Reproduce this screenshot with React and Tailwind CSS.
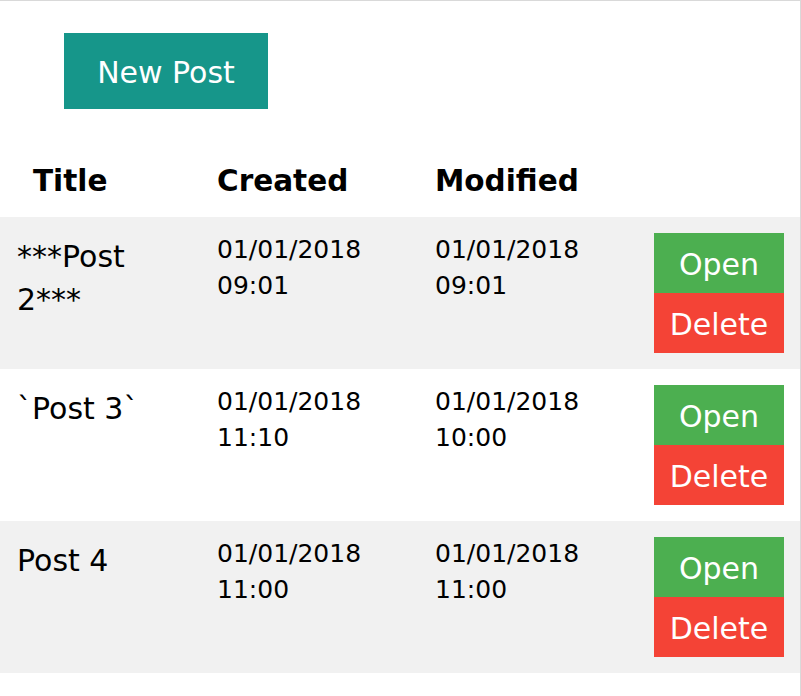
const posts = [
  { title: '***Post 2***', created: ['01/01/2018', '09:01'], modified: ['01/01/2018', '09:01'] },
  { title: '`Post 3`', created: ['01/01/2018', '11:10'], modified: ['01/01/2018', '10:00'] },
  { title: 'Post 4', created: ['01/01/2018', '11:00'], modified: ['01/01/2018', '11:00'] },
];

export default function App() {
  return (
    <div
      className="w-[801px] h-[696px] bg-white border-t border-r border-[#d9d9d9] text-black overflow-hidden"
      style={{ fontFamily: '"DejaVu Sans", Verdana, sans-serif' }}
    >
      <div className="pt-[32px]">
        <button className="ml-[64px] w-[204px] h-[76px] bg-[#16968a] text-white text-[30px] leading-none pt-[3px]">
          New Post
        </button>
      </div>

      {/* Table header */}
      <div className="mt-[33px] grid grid-cols-[201px_218px_219px_1fr] pt-[18px] pb-[14px] text-[29.5px] leading-[43px] font-bold">
        <div className="pl-[33px]">Title</div>
        <div className="pl-[16px]">Created</div>
        <div className="pl-[16px]">Modified</div>
        <div></div>
      </div>

      {/* Rows */}
      {posts.map((post, i) => (
        <div
          key={i}
          className={`grid grid-cols-[201px_218px_219px_1fr] h-[152px] ${i % 2 === 0 ? 'bg-[#f1f1f1]' : 'bg-white'}`}
        >
          <div className="pl-[17px] pr-[16px] pt-[18px] text-[30px] leading-[43px]">{post.title}</div>
          <div className="pl-[16px] pt-[15px] text-[25px] leading-[36px]">
            <div>{post.created[0]}</div>
            <div>{post.created[1]}</div>
          </div>
          <div className="pl-[16px] pt-[15px] text-[25px] leading-[36px]">
            <div>{post.modified[0]}</div>
            <div>{post.modified[1]}</div>
          </div>
          <div className="pl-[16px] pt-[16px] flex flex-col">
            <button className="w-[130px] h-[60px] bg-[#4caf50] text-white text-[30px] leading-none pt-[3px]">Open</button>
            <button className="w-[130px] h-[60px] bg-[#f44336] text-white text-[30px] leading-none pt-[3px]">Delete</button>
          </div>
        </div>
      ))}
    </div>
  );
}
